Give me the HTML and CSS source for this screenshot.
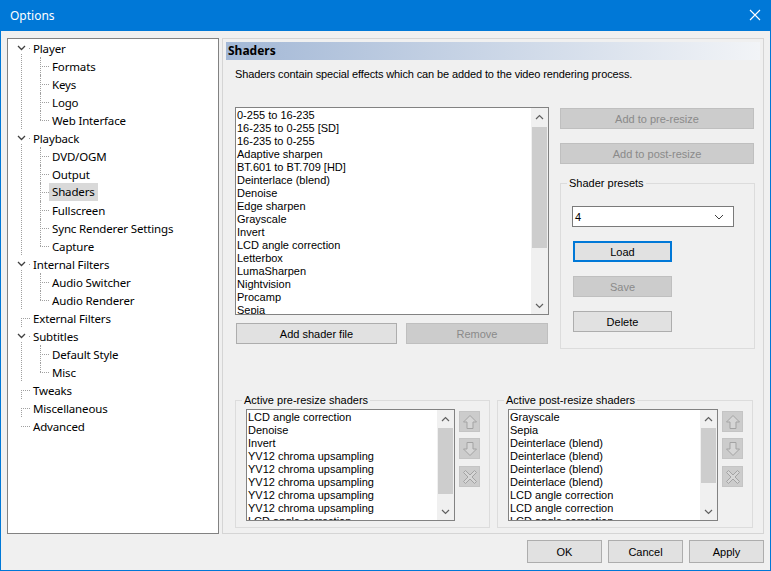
FILE: index.html
```html
<!DOCTYPE html>
<html lang="en">
<head>
    <meta charset="UTF-8">
    <title>Options</title>
    <link rel="stylesheet" href="styles.css">
</head>
<body>
<div class="window">
    <div class="titlebar">
        <span class="title">Options</span>
        <svg class="close" width="12" height="12" viewBox="0 0 12 12"><path d="M1 1L11 11M11 1L1 11" stroke="#fff" stroke-width="1.1" fill="none"/></svg>
    </div>

    <div class="content">
        <div class="main">
            <div class="treebox">
                <ul class="tree">
                    <li><div class="node"><svg class="chev" width="12" height="10" viewBox="0 0 12 10"><rect width="12" height="10" fill="#fff"/><path d="M2 3L5.5 6.5L9 3" stroke="#404040" stroke-width="1.3" fill="none"/></svg><span>Player</span></div>
                        <ul>
                            <li><div class="node"><span>Formats</span></div></li>
                            <li><div class="node"><span>Keys</span></div></li>
                            <li><div class="node"><span>Logo</span></div></li>
                            <li><div class="node"><span>Web Interface</span></div></li>
                        </ul>
                    </li>
                    <li><div class="node"><svg class="chev" width="12" height="10" viewBox="0 0 12 10"><rect width="12" height="10" fill="#fff"/><path d="M2 3L5.5 6.5L9 3" stroke="#404040" stroke-width="1.3" fill="none"/></svg><span>Playback</span></div>
                        <ul>
                            <li><div class="node"><span>DVD/OGM</span></div></li>
                            <li><div class="node"><span>Output</span></div></li>
                            <li><div class="node"><span class="selected">Shaders</span></div></li>
                            <li><div class="node"><span>Fullscreen</span></div></li>
                            <li><div class="node"><span>Sync Renderer Settings</span></div></li>
                            <li><div class="node"><span>Capture</span></div></li>
                        </ul>
                    </li>
                    <li><div class="node"><svg class="chev" width="12" height="10" viewBox="0 0 12 10"><rect width="12" height="10" fill="#fff"/><path d="M2 3L5.5 6.5L9 3" stroke="#404040" stroke-width="1.3" fill="none"/></svg><span>Internal Filters</span></div>
                        <ul>
                            <li><div class="node"><span>Audio Switcher</span></div></li>
                            <li><div class="node"><span>Audio Renderer</span></div></li>
                        </ul>
                    </li>
                    <li><div class="node"><span>External Filters</span></div></li>
                    <li><div class="node"><svg class="chev" width="12" height="10" viewBox="0 0 12 10"><rect width="12" height="10" fill="#fff"/><path d="M2 3L5.5 6.5L9 3" stroke="#404040" stroke-width="1.3" fill="none"/></svg><span>Subtitles</span></div>
                        <ul>
                            <li><div class="node"><span>Default Style</span></div></li>
                            <li><div class="node"><span>Misc</span></div></li>
                        </ul>
                    </li>
                    <li><div class="node"><span>Tweaks</span></div></li>
                    <li><div class="node"><span>Miscellaneous</span></div></li>
                    <li><div class="node"><span>Advanced</span></div></li>
                </ul>
            </div>

            <div class="panel">
                <div class="panel-head">Shaders</div>
                <div class="panel-body">
                    <p class="desc">Shaders contain special effects which can be added to the video rendering process.</p>

                    <div class="top-row">
                        <div class="left-col">
                            <div class="listbox shader-list">
                                <div class="items">
                                    <div>0-255 to 16-235</div>
                                    <div>16-235 to 0-255 [SD]</div>
                                    <div>16-235 to 0-255</div>
                                    <div>Adaptive sharpen</div>
                                    <div>BT.601 to BT.709 [HD]</div>
                                    <div>Deinterlace (blend)</div>
                                    <div>Denoise</div>
                                    <div>Edge sharpen</div>
                                    <div>Grayscale</div>
                                    <div>Invert</div>
                                    <div>LCD angle correction</div>
                                    <div>Letterbox</div>
                                    <div>LumaSharpen</div>
                                    <div>Nightvision</div>
                                    <div>Procamp</div>
                                    <div>Sepia</div>
                                </div>
                                <div class="sb">
                                    <div class="sb-btn"><svg width="9" height="6" viewBox="0 0 9 6"><path d="M1 5L4.5 1.5L8 5" stroke="#606060" stroke-width="1.2" fill="none"/></svg></div>
                                    <div class="sb-track"><div class="thumb thumb-main"></div></div>
                                    <div class="sb-btn"><svg width="9" height="6" viewBox="0 0 9 6"><path d="M1 1L4.5 4.5L8 1" stroke="#606060" stroke-width="1.2" fill="none"/></svg></div>
                                </div>
                            </div>
                            <div class="list-buttons">
                                <button class="btn btn-add">Add shader file</button>
                                <button class="btn btn-remove" disabled>Remove</button>
                            </div>
                        </div>

                        <div class="right-col">
                            <button class="btn btn-wide" disabled>Add to pre-resize</button>
                            <button class="btn btn-wide btn-post" disabled>Add to post-resize</button>

                            <fieldset class="group presets">
                                <legend>Shader presets</legend>
                                <div class="presets-body">
                                    <div class="combo"><span>4</span><svg width="10" height="6" viewBox="0 0 10 6"><path d="M1 1L5 5L9 1" stroke="#404040" stroke-width="1" fill="none"/></svg></div>
                                    <button class="btn btn-preset btn-default">Load</button>
                                    <button class="btn btn-preset" disabled>Save</button>
                                    <button class="btn btn-preset">Delete</button>
                                </div>
                            </fieldset>
                        </div>
                    </div>

                    <div class="bottom-row">
                        <fieldset class="group active-group">
                            <legend>Active pre-resize shaders</legend>
                            <div class="active-body">
                                <div class="listbox active-list">
                                    <div class="items">
                                        <div>LCD angle correction</div>
                                        <div>Denoise</div>
                                        <div>Invert</div>
                                        <div>YV12 chroma upsampling</div>
                                        <div>YV12 chroma upsampling</div>
                                        <div>YV12 chroma upsampling</div>
                                        <div>YV12 chroma upsampling</div>
                                        <div>YV12 chroma upsampling</div>
                                        <div>LCD angle correction</div>
                                    </div>
                                    <div class="sb">
                                        <div class="sb-btn"><svg width="9" height="6" viewBox="0 0 9 6"><path d="M1 5L4.5 1.5L8 5" stroke="#606060" stroke-width="1.2" fill="none"/></svg></div>
                                        <div class="sb-track"><div class="thumb thumb-pre"></div></div>
                                        <div class="sb-btn"><svg width="9" height="6" viewBox="0 0 9 6"><path d="M1 1L4.5 4.5L8 1" stroke="#606060" stroke-width="1.2" fill="none"/></svg></div>
                                    </div>
                                </div>
                                <div class="arrows">
                                    <button class="icon-btn" disabled><svg width="16" height="16" viewBox="0 0 16 16"><path d="M8 1.5L14.5 8H11V14.5H5V8H1.5Z" fill="#d6d6d6" stroke="#a3a3a3"/></svg></button>
                                    <button class="icon-btn" disabled><svg width="16" height="16" viewBox="0 0 16 16"><path d="M8 14.5L14.5 8H11V1.5H5V8H1.5Z" fill="#d6d6d6" stroke="#a3a3a3"/></svg></button>
                                    <button class="icon-btn" disabled><svg width="16" height="16" viewBox="0 0 16 16"><path d="M3.5 1.5L8 6L12.5 1.5L14.5 3.5L10 8L14.5 12.5L12.5 14.5L8 10L3.5 14.5L1.5 12.5L6 8L1.5 3.5Z" fill="#d6d6d6" stroke="#a3a3a3"/></svg></button>
                                </div>
                            </div>
                        </fieldset>

                        <fieldset class="group active-group post-group">
                            <legend>Active post-resize shaders</legend>
                            <div class="active-body">
                                <div class="listbox active-list">
                                    <div class="items">
                                        <div>Grayscale</div>
                                        <div>Sepia</div>
                                        <div>Deinterlace (blend)</div>
                                        <div>Deinterlace (blend)</div>
                                        <div>Deinterlace (blend)</div>
                                        <div>Deinterlace (blend)</div>
                                        <div>LCD angle correction</div>
                                        <div>LCD angle correction</div>
                                        <div>LCD angle correction</div>
                                    </div>
                                    <div class="sb">
                                        <div class="sb-btn"><svg width="9" height="6" viewBox="0 0 9 6"><path d="M1 5L4.5 1.5L8 5" stroke="#606060" stroke-width="1.2" fill="none"/></svg></div>
                                        <div class="sb-track"><div class="thumb thumb-post"></div></div>
                                        <div class="sb-btn"><svg width="9" height="6" viewBox="0 0 9 6"><path d="M1 1L4.5 4.5L8 1" stroke="#606060" stroke-width="1.2" fill="none"/></svg></div>
                                    </div>
                                </div>
                                <div class="arrows">
                                    <button class="icon-btn" disabled><svg width="16" height="16" viewBox="0 0 16 16"><path d="M8 1.5L14.5 8H11V14.5H5V8H1.5Z" fill="#d6d6d6" stroke="#a3a3a3"/></svg></button>
                                    <button class="icon-btn" disabled><svg width="16" height="16" viewBox="0 0 16 16"><path d="M8 14.5L14.5 8H11V1.5H5V8H1.5Z" fill="#d6d6d6" stroke="#a3a3a3"/></svg></button>
                                    <button class="icon-btn" disabled><svg width="16" height="16" viewBox="0 0 16 16"><path d="M3.5 1.5L8 6L12.5 1.5L14.5 3.5L10 8L14.5 12.5L12.5 14.5L8 10L3.5 14.5L1.5 12.5L6 8L1.5 3.5Z" fill="#d6d6d6" stroke="#a3a3a3"/></svg></button>
                                </div>
                            </div>
                        </fieldset>
                    </div>
                </div>
            </div>
        </div>

        <div class="footer">
            <button class="btn btn-dlg">OK</button>
            <button class="btn btn-dlg">Cancel</button>
            <button class="btn btn-dlg">Apply</button>
        </div>
    </div>
</div>
</body>
</html>
```

FILE: styles.css
```css
* { box-sizing: border-box; }
body { margin: 0; background: #f0f0f0; font-family: "Liberation Sans", Arial, sans-serif; font-size: 11px; color: #000; }

.window { width: 771px; height: 571px; border: 1px solid #0078d7; border-top: 0; background: #f0f0f0; }
.titlebar { height: 31px; background: #0078d7; color: #fff; display: flex; align-items: center; justify-content: space-between; padding: 0 10px 1px 9px; }
.title { font-family: "Noto Sans", sans-serif; font-size: 12px; }
.close { margin-right: -1px; }

.content { padding: 7px 6px 0 6px; }
.main { display: flex; height: 496px; }
.footer { display: flex; justify-content: flex-end; gap: 6px; padding: 6px 0 7px; }

/* tree */
.treebox { width: 212px; background: #fff; border: 1px solid #828282; margin-right: 3px; font-family: "Noto Sans", sans-serif; font-size: 11.5px; letter-spacing: -0.15px; }
.tree, .tree ul { list-style: none; margin: 0; padding: 0; }
.tree li { position: relative; }
.node { height: 18px; display: flex; align-items: center; position: relative; padding-left: 25px; white-space: nowrap; }
.tree ul .node { padding-left: 44px; }
.tree > li::before { content: ""; position: absolute; left: 13px; top: 9px; bottom: 0; border-left: 1px dotted #a0a0a0; }
.tree > li:last-child::before { bottom: auto; height: 0; }
.tree > li > .node::before { content: ""; position: absolute; left: 13px; top: 9px; width: 9px; border-top: 1px dotted #a0a0a0; }
.tree ul > li::before { content: ""; position: absolute; left: 32px; top: 0; bottom: 0; border-left: 1px dotted #a0a0a0; }
.tree ul > li:last-child::before { bottom: auto; height: 9px; }
.tree ul .node::before { content: ""; position: absolute; left: 32px; top: 9px; width: 9px; border-top: 1px dotted #a0a0a0; }
.chev { position: absolute; left: 8px; top: 4px; z-index: 1; }
.selected { background: #d9d9d9; margin-left: -3px; padding: 0 3px; line-height: 18px; }

/* panel */
.panel { flex: 1; border: 1px solid #d5d5d5; padding: 3px; }
.panel-head { height: 18px; line-height: 18px; padding-left: 2px; font-family: "Noto Sans", sans-serif; font-weight: bold; font-size: 12px; background: linear-gradient(to right, #a3b8d6, #f2f4f7); }
.panel-body { padding-left: 9px; }
.desc { margin: 8px 0 0; line-height: 13px; letter-spacing: -0.12px; }

.top-row { display: flex; margin-top: 26px; }
.left-col { width: 314px; }
.right-col { width: 195px; margin-left: 11px; padding-top: 1px; }

.listbox { display: flex; background: #fff; border: 1px solid #828282; overflow: hidden; }
.items { flex: 1; padding: 1px 0 0 1px; line-height: 13px; white-space: nowrap; overflow: hidden; }
.shader-list { height: 208px; }
.sb { width: 17px; background: #f0f0f0; display: flex; flex-direction: column; }
.sb-btn { height: 17px; display: flex; align-items: center; justify-content: center; }
.sb-track { flex: 1; padding: 2px 1px 0; }
.thumb { background: #cdcdcd; }
.thumb-main { height: 121px; }
.thumb-pre { height: 66px; margin-top: -1px; }
.thumb-post { height: 55px; margin-top: -1px; }

.btn { font-family: "Liberation Sans", Arial, sans-serif; font-size: 11px; color: #000; background: #e1e1e1; border: 1px solid #adadad; height: 21px; padding: 0; display: block; }
.btn:disabled { background: #cccccc; border-color: #bfbfbf; color: #8a8a8a; }
.list-buttons { display: flex; gap: 9px; margin: 8px 0 0 1px; }
.btn-add { width: 161px; }
.btn-remove { width: 142px; }
.btn-wide { width: 194px; }
.btn-post { margin-top: 14px; }
.btn-preset { width: 99px; margin: 14px 0 0 1px; }
.btn-default { border: 2px solid #0078d7; }
.btn-dlg { width: 75px; height: 23px; }

.group { border: 1px solid #dcdcdc; margin: 0; padding: 0; min-width: 0; }
.group legend { margin-left: 6px; padding: 0 2px; line-height: 13px; }
.presets { margin-top: 13px; width: 195px; }
.presets-body { padding: 16px 0 16px 11px; }
.combo { width: 162px; height: 21px; background: #fff; border: 1px solid #7a7a7a; display: flex; align-items: center; justify-content: space-between; padding: 0 9px 0 2px; }

.bottom-row { display: flex; gap: 7px; margin-top: 45px; }
.active-group { width: 255px; height: 134px; }
.post-group { width: 256px; }
.active-body { display: flex; padding: 2px 0 0 10px; }
.active-list { width: 209px; height: 112px; }
.post-group .active-list { width: 210px; }
.arrows { display: flex; flex-direction: column; gap: 6px; margin-left: 4px; padding-top: 2px; }
.icon-btn { width: 21px; height: 21px; padding: 0; background: #cccccc; border: 1px solid #c4c4c4; display: flex; align-items: center; justify-content: center; }
.icon-btn:last-child { margin-top: 1px; }
```
